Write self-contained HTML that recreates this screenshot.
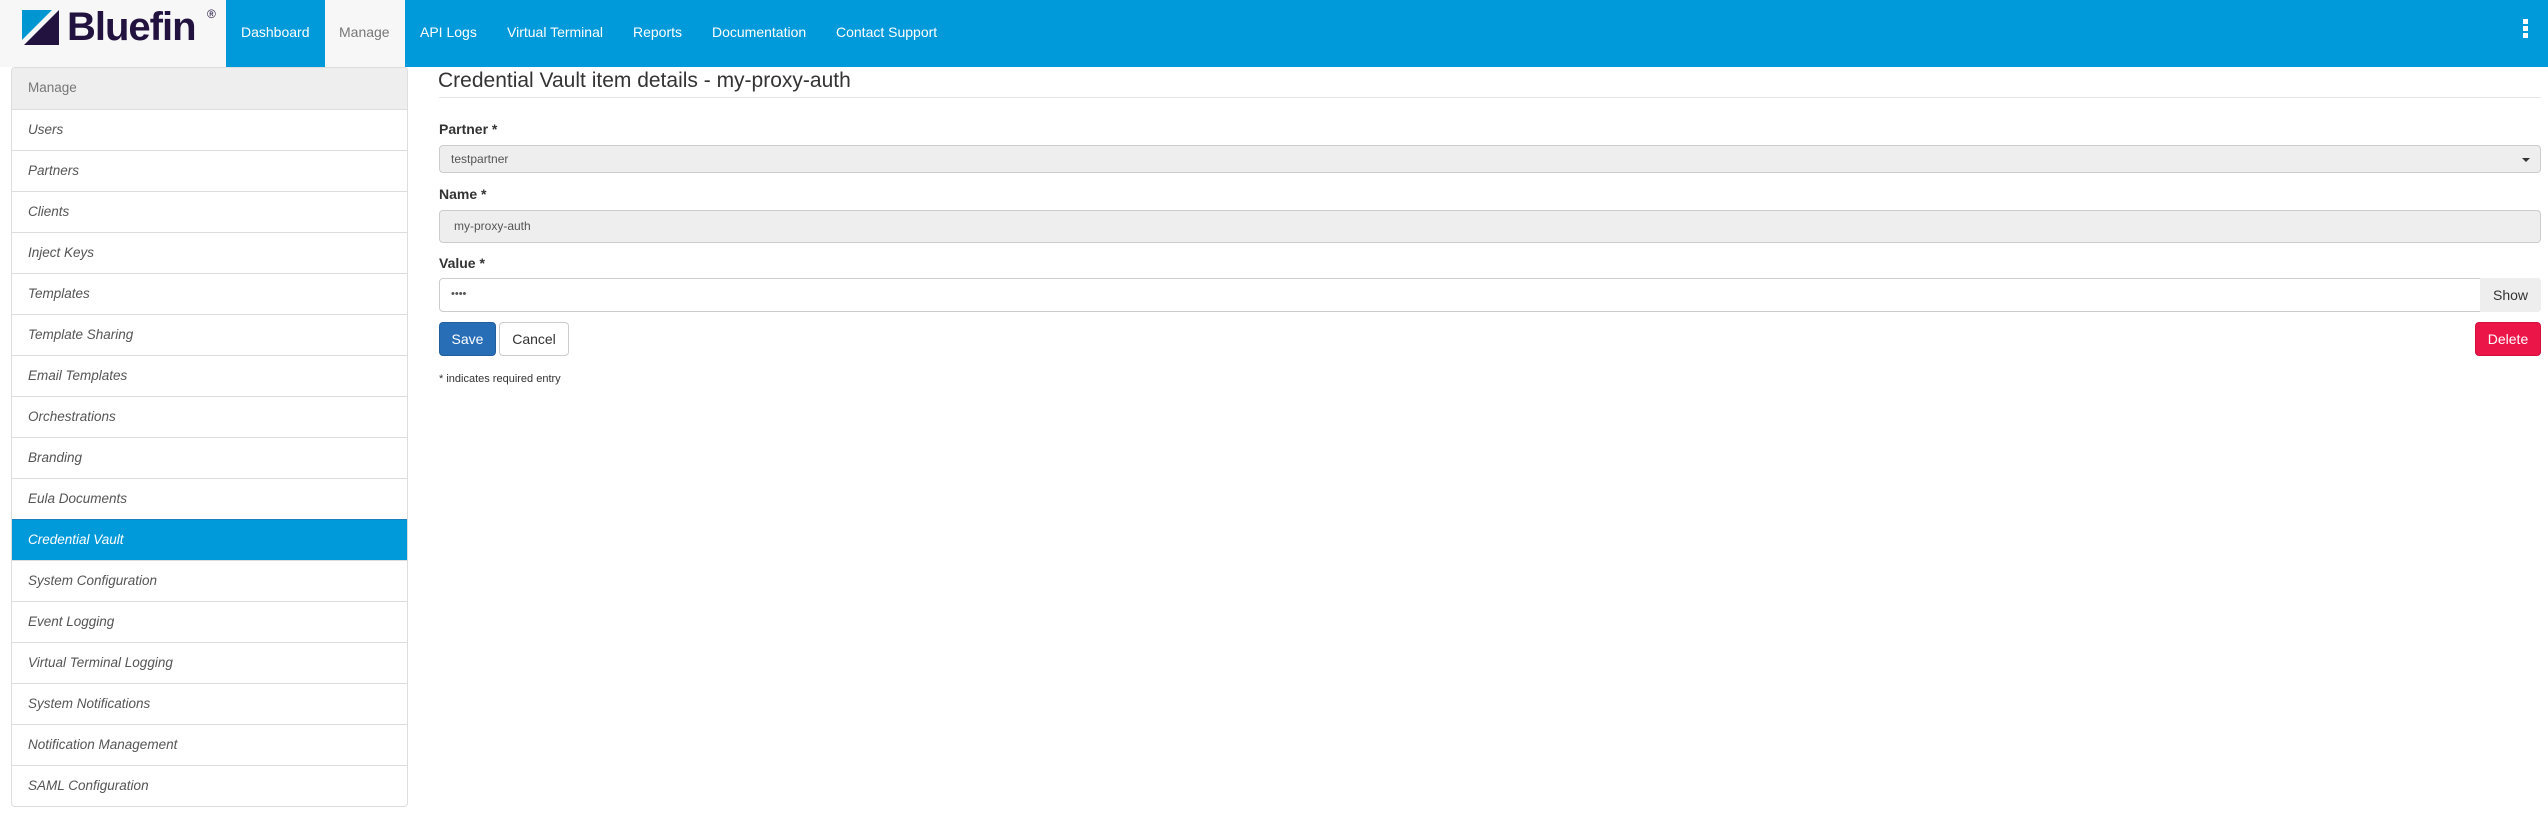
<!DOCTYPE html>
<html><head><meta charset="utf-8"><style>
*{box-sizing:border-box;margin:0;padding:0}
body{width:2548px;height:835px;background:#fff;font-family:"Liberation Sans",sans-serif;position:relative;overflow:hidden;color:#333}
.nav{position:absolute;left:0;top:0;width:2548px;height:67px;background:#0099d9}
.brand{position:absolute;left:0;top:0;width:226px;height:67px;background:#f7f7f7}
.nav a{position:absolute;top:0;height:67px;line-height:64px;color:#fff;font-size:14px;text-decoration:none}
.nav a.act{background:#f7f7f7;color:#777}
.side{position:absolute;left:11px;top:67px;width:397px;border:1px solid #ddd;border-radius:4px;overflow:hidden}
.side div{height:41px;line-height:40px;border-top:1px solid #ddd;padding-left:16px;font-size:13.5px;font-style:italic;color:#555}
.side div:first-child{border-top:none;background:#eee;color:#777;font-style:normal}
.side div.on{background:#0099d9;color:#fff;border-color:#1a7fc0}
.abs{position:absolute}
.lbl{position:absolute;left:439px;font-weight:bold;font-size:14px;color:#333}
.inp{position:absolute;left:439px;width:2102px;border:1px solid #ccc;border-radius:4px;background:#eee;font-size:12px;color:#555;padding-left:11px}
</style></head><body>
<div class="nav">
 <div class="brand">
  <svg class="abs" style="left:22px;top:10px" width="38" height="35"><polygon points="0,0 30,0 0,30" fill="#0096d1"/><polygon points="37,0 37,35 2,35" fill="#22123f"/></svg>
  <div class="abs" style="left:67px;top:5px;font-size:40px;font-weight:bold;color:#22123f;letter-spacing:-1px">Bluefin</div>
  <div class="abs" style="left:207px;top:7px;font-size:12px;color:#22123f">®</div>
 </div>
 <a style="left:226px;width:99px;padding-left:15px">Dashboard</a>
 <a class="act" style="left:325px;width:80px;padding-left:14px">Manage</a>
 <a style="left:420px">API Logs</a>
 <a style="left:507px">Virtual Terminal</a>
 <a style="left:633px">Reports</a>
 <a style="left:712px">Documentation</a>
 <a style="left:836px">Contact Support</a>
 <div class="abs" style="left:2523px;top:19px;width:5px;height:5px;background:#fff;box-shadow:0 7px 0 #fff,0 14px 0 #fff"></div>
</div>
<div class="side">
<div>Manage</div><div>Users</div><div>Partners</div><div>Clients</div><div>Inject Keys</div><div>Templates</div><div>Template Sharing</div><div>Email Templates</div><div>Orchestrations</div><div>Branding</div><div>Eula Documents</div><div class="on">Credential Vault</div><div>System Configuration</div><div>Event Logging</div><div>Virtual Terminal Logging</div><div>System Notifications</div><div>Notification Management</div><div>SAML Configuration</div>
</div>
<div class="abs" style="left:438px;top:69px;font-size:21px;color:#333">Credential Vault item details - my-proxy-auth</div>
<div class="abs" style="left:439px;top:97px;width:2102px;height:1px;background:#e5e5e5"></div>
<div class="lbl" style="top:121px">Partner *</div>
<div class="inp" style="top:145px;height:28px;line-height:26px">testpartner</div>
<div class="abs" style="left:2522px;top:158px;border-left:4px solid transparent;border-right:4px solid transparent;border-top:4px solid #333"></div>
<div class="lbl" style="top:186px">Name *</div>
<div class="inp" style="top:210px;height:33px;line-height:31px;padding-left:14px">my-proxy-auth</div>
<div class="lbl" style="top:255px">Value *</div>
<div class="inp" style="top:278px;height:34px;line-height:30px;background:#fff;font-size:11px">••••</div>
<div class="abs" style="left:2480px;top:278px;width:61px;height:34px;background:#eee;border-radius:0 4px 4px 0;line-height:34px;text-align:center;font-size:14px;color:#333">Show</div>
<div class="abs" style="left:439px;top:322px;width:57px;height:34px;background:#286eb6;border:1px solid #245f9d;border-radius:4px;color:#fff;font-size:14px;line-height:32px;text-align:center">Save</div>
<div class="abs" style="left:499px;top:322px;width:70px;height:34px;background:#fff;border:1px solid #ccc;border-radius:4px;color:#333;font-size:14px;line-height:32px;text-align:center">Cancel</div>
<div class="abs" style="left:2475px;top:322px;width:66px;height:34px;background:#ec1548;border:1px solid #d40f3d;border-radius:4px;color:#fff;font-size:14px;line-height:32px;text-align:center">Delete</div>
<div class="abs" style="left:439px;top:373px;font-size:11px;color:#333">* indicates required entry</div>
</body></html>
